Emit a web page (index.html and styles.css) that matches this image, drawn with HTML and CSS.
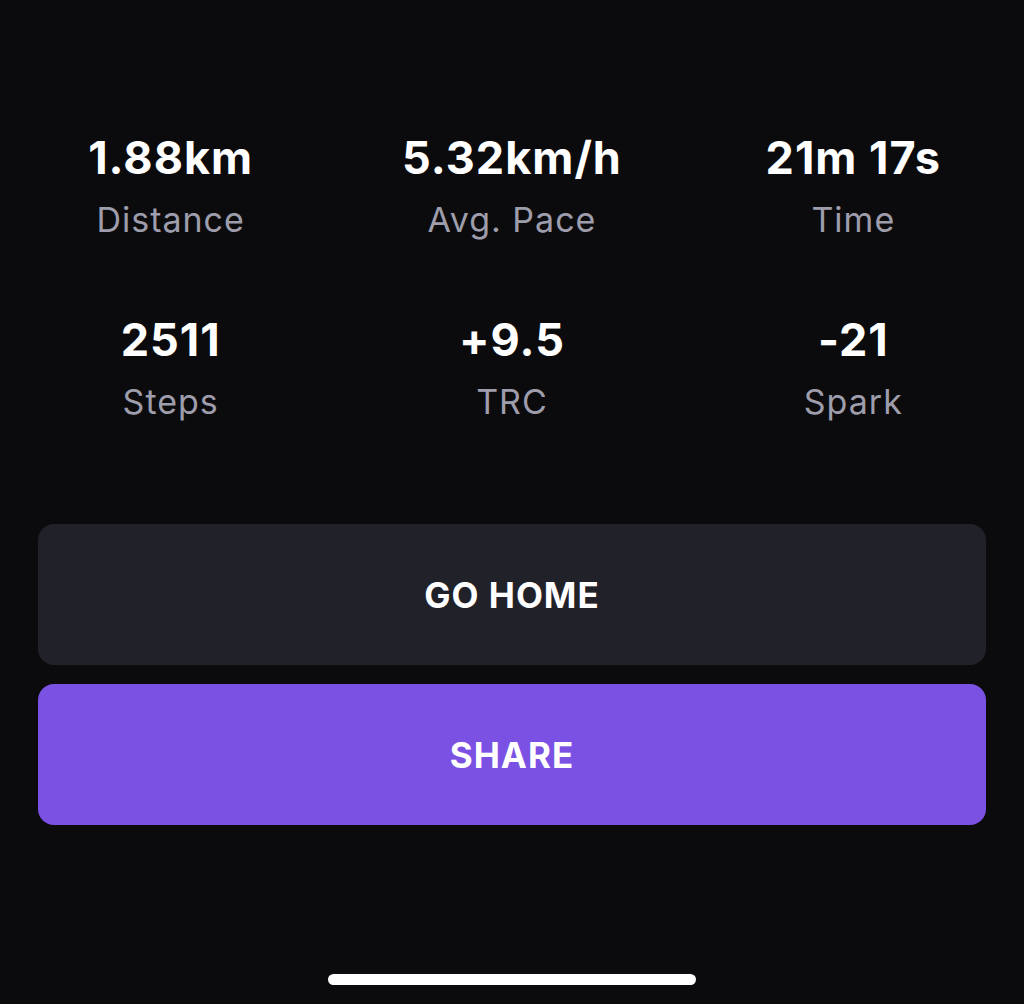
FILE: index.html
```html
<!DOCTYPE html>
<html>
<head>
    <title>Resumo da caminhada</title>
    <link rel="stylesheet" href="styles.css">
</head>
<body>

    <div class="stats">
        <div class="stat">
            <div class="value">1.88km</div>
            <div class="label">Distance</div>
        </div>
        <div class="stat">
            <div class="value">5.32km/h</div>
            <div class="label">Avg. Pace</div>
        </div>
        <div class="stat">
            <div class="value">21m 17s</div>
            <div class="label">Time</div>
        </div>
        <div class="stat">
            <div class="value">2511</div>
            <div class="label">Steps</div>
        </div>
        <div class="stat">
            <div class="value">+9.5</div>
            <div class="label">TRC</div>
        </div>
        <div class="stat">
            <div class="value">-21</div>
            <div class="label">Spark</div>
        </div>
    </div>

    <div class="actions">
        <button class="btn btn-dark">GO HOME</button>
        <button class="btn btn-primary">SHARE</button>
    </div>

    <div class="home-bar"></div>

</body>
</html>
```

FILE: styles.css
```css
body {
    margin: 0;
    height: 1004px;
    background-color: #0b0b0d;
    font-family: Inter, "Noto Sans", sans-serif;
    color: #fff;
    display: flex;
    flex-direction: column;
}
.stats {
    display: grid;
    grid-template-columns: 1fr 1fr 1fr;
    row-gap: 73px;
    padding-top: 132px;
}
.stat {
    text-align: center;
}
.value {
    font-size: 45px;
    line-height: 52px;
    font-weight: 700;
    letter-spacing: 1px;
}
.label {
    margin-top: 15px;
    font-size: 34px;
    line-height: 42px;
    letter-spacing: 1px;
    color: #9e9dac;
}
.actions {
    display: flex;
    flex-direction: column;
    gap: 19px;
    margin: 101px 38px 0;
}
.btn {
    height: 141px;
    border: none;
    border-radius: 16px;
    font-family: inherit;
    font-size: 35px;
    font-weight: 700;
    letter-spacing: 1px;
    color: #fff;
    cursor: pointer;
}
.btn-dark {
    background-color: #212129;
}
.btn-primary {
    background-color: #7b51e3;
}
.home-bar {
    width: 368px;
    height: 11px;
    border-radius: 6px;
    background-color: #fff;
    margin: auto auto 19px;
}
```
